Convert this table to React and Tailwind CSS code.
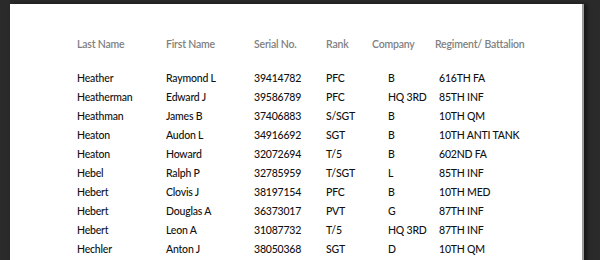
const rows = [
  ["Heather", "Raymond L", "39414782", "PFC", "B", "616TH FA"],
  ["Heatherman", "Edward J", "39586789", "PFC", "HQ 3RD", "85TH INF"],
  ["Heathman", "James B", "37406883", "S/SGT", "B", "10TH QM"],
  ["Heaton", "Audon L", "34916692", "SGT", "B", "10TH ANTI TANK"],
  ["Heaton", "Howard", "32072694", "T/5", "B", "602ND FA"],
  ["Hebel", "Ralph P", "32785959", "T/SGT", "L", "85TH INF"],
  ["Hebert", "Clovis J", "38197154", "PFC", "B", "10TH MED"],
  ["Hebert", "Douglas A", "36373017", "PVT", "G", "87TH INF"],
  ["Hebert", "Leon A", "31087732", "T/5", "HQ 3RD", "87TH INF"],
  ["Hechler", "Anton J", "38050368", "SGT", "D", "10TH QM"],
];

export default function App() {
  return (
    <div className="h-[260px] w-[600px] overflow-hidden bg-[#2a2a2a] pl-[10px] pt-[4px]">
      <div
        className="h-[300px] w-[574px] border-r-2 border-[#9a9a9a] bg-white pl-[67px] pt-[31px] text-[10.5px] tracking-[-0.2px] shadow-[3px_0_4px_rgba(0,0,0,0.5)]"
        style={{ fontFamily: "Lato, 'Open Sans', sans-serif" }}
      >
        <div className="mb-[15px] flex h-[19px] items-center font-semibold text-[#808080]">
          <div className="w-[89px]">Last Name</div>
          <div className="w-[88px]">First Name</div>
          <div className="w-[72px]">Serial No.</div>
          <div className="w-[46px]">Rank</div>
          <div className="w-[63px]">Company</div>
          <div>Regiment/ Battalion</div>
        </div>
        {rows.map((r, i) => (
          <div key={i} className="flex h-[19px] items-center font-medium text-[#111]">
            <div className="w-[89px]">{r[0]}</div>
            <div className="w-[88px]">{r[1]}</div>
            <div className="w-[72px]">{r[2]}</div>
            <div className="w-[46px]">{r[3]}</div>
            <div className="w-[67px] pl-[16px]">{r[4]}</div>
            <div>{r[5]}</div>
          </div>
        ))}
      </div>
    </div>
  );
}
